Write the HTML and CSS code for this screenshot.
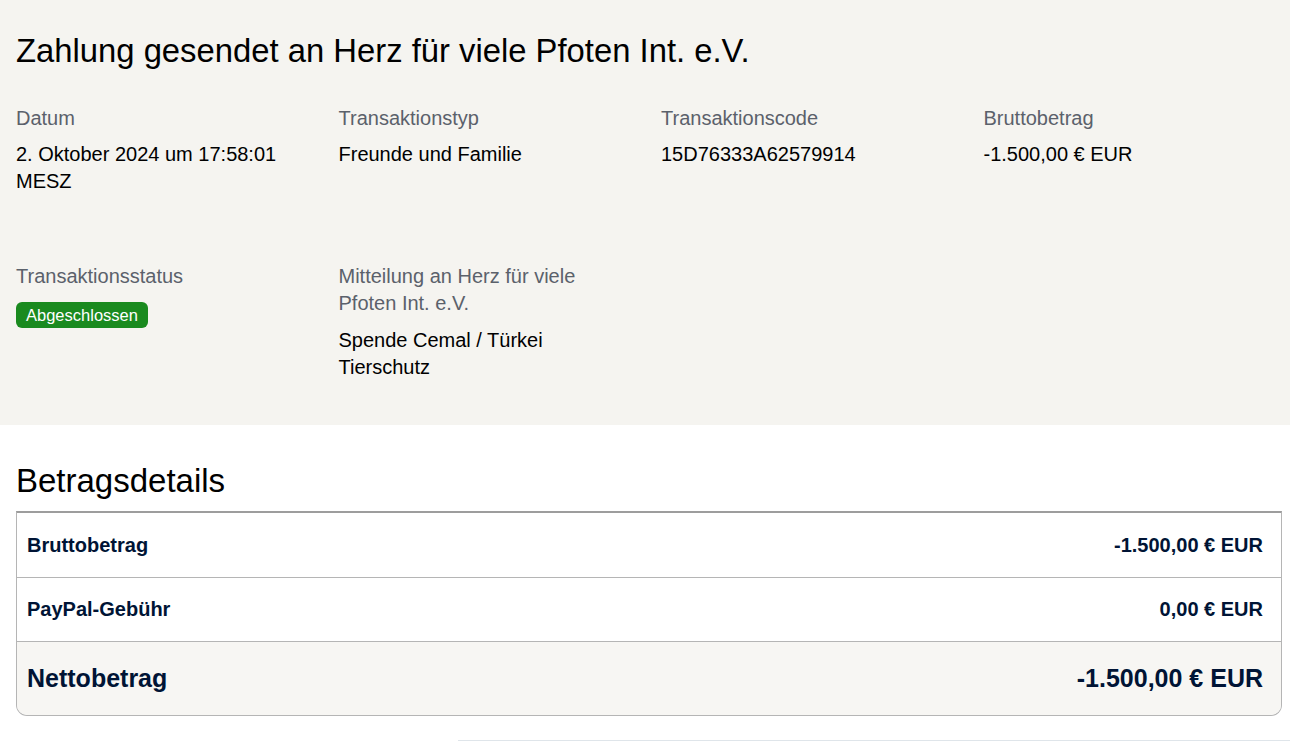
FILE: index.html
```html
<!DOCTYPE html>
<html lang="de">
<head>
<meta charset="utf-8">
<title>Transaktionsdetails</title>
<link rel="stylesheet" href="styles.css">
</head>
<body>
<section class="summary">
  <h1 class="title">Zahlung gesendet an Herz für viele Pfoten Int. e.V.</h1>
  <div class="facts">
    <div class="fact">
      <div class="label">Datum</div>
      <div class="value">2. Oktober 2024 um 17:58:01 MESZ</div>
    </div>
    <div class="fact">
      <div class="label">Transaktionstyp</div>
      <div class="value">Freunde und Familie</div>
    </div>
    <div class="fact">
      <div class="label">Transaktionscode</div>
      <div class="value">15D76333A62579914</div>
    </div>
    <div class="fact">
      <div class="label">Bruttobetrag</div>
      <div class="value">-1.500,00 € EUR</div>
    </div>
    <div class="fact">
      <div class="label">Transaktionsstatus</div>
      <div class="status"><span class="badge">Abgeschlossen</span></div>
    </div>
    <div class="fact">
      <div class="label">Mitteilung an Herz für viele Pfoten Int. e.V.</div>
      <div class="value value-msg">Spende Cemal / Türkei Tierschutz</div>
    </div>
  </div>
</section>
<section class="amounts">
  <h2 class="amounts-title">Betragsdetails</h2>
  <div class="amount-table">
    <div class="amount-row amount-first">
      <span class="amount-label">Bruttobetrag</span>
      <span class="amount-value">-1.500,00 € EUR</span>
    </div>
    <div class="amount-row">
      <span class="amount-label">PayPal-Gebühr</span>
      <span class="amount-value">0,00 € EUR</span>
    </div>
    <div class="amount-row amount-total">
      <span class="amount-label">Nettobetrag</span>
      <span class="amount-value">-1.500,00 € EUR</span>
    </div>
  </div>
  <div class="next-rule"></div>
</section>
</body>
</html>
```
FILE: styles.css
```css
html, body {
  margin: 0;
  padding: 0;
  background: #ffffff;
}

body {
  font-family: "Liberation Sans", Arial, sans-serif;
  color: #000000;
}

.summary {
  background: #f5f4f0;
  padding: 33px 16px 44px 16px;
}

.title {
  margin: 0 0 36px 0;
  font-size: 32.8px;
  line-height: 36px;
  font-weight: 400;
  color: #000000;
}

.facts {
  display: grid;
  grid-template-columns: repeat(4, 1fr);
  column-gap: 32px;
  row-gap: 68px;
}

.fact {
  display: flex;
  flex-direction: column;
}

.label {
  font-size: 20px;
  line-height: 27px;
  color: #5b616b;
  margin-bottom: 9px;
}

.value {
  font-size: 20px;
  line-height: 27px;
  color: #000000;
}

.value-msg {
  margin-top: 1px;
}

.status {
  padding-top: 3px;
}

.badge {
  display: inline-block;
  background: #1a8a1f;
  color: #ffffff;
  font-size: 16.5px;
  line-height: 26px;
  height: 26px;
  padding: 0 10px;
  border-radius: 6px;
}

.amounts {
  padding: 36px 8px 0 16px;
}

.amounts-title {
  margin: 0 0 10px 0;
  font-size: 33px;
  line-height: 40px;
  font-weight: 400;
  color: #000000;
}

.amount-table {
  border: 1px solid #b5b5b5;
  border-top: 2px solid #9d9d9d;
  border-radius: 0 0 11px 11px;
  overflow: hidden;
  color: #001435;
}

.amount-row {
  display: flex;
  justify-content: space-between;
  align-items: center;
  height: 63px;
  padding: 0 18px 0 10px;
  border-bottom: 1px solid #b5b5b5;
  font-size: 20px;
  font-weight: 700;
}

.amount-first {
  height: 64px;
}

.amount-total {
  height: 73px;
  border-bottom: none;
  background: #f7f6f3;
  font-size: 25px;
}

.next-rule {
  margin: 24px -8px 0 442px;
  border-top: 1px solid #dfe5ea;
}
```
